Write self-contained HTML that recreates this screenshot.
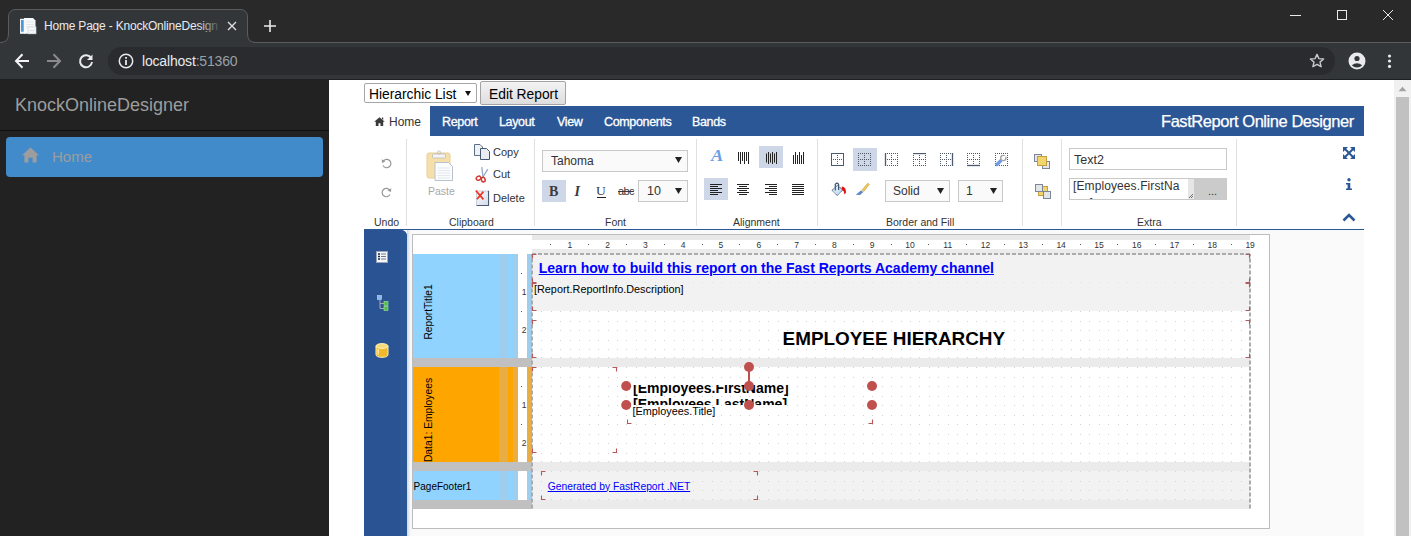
<!DOCTYPE html>
<html><head><meta charset="utf-8">
<style>
*{margin:0;padding:0;box-sizing:border-box}
html,body{width:1411px;height:536px;overflow:hidden;background:#fff;font-family:"Liberation Sans",sans-serif}
.a{position:absolute}
#frame{left:0;top:0;width:1411px;height:42px;background:#292929}
#toolbar{left:0;top:42px;width:1411px;height:37px;background:#323639;border-top:1px solid #5b5c5e}
#tbbot{left:0;top:79px;width:1411px;height:1px;background:#1e1f21}
#side{left:0;top:80px;width:329px;height:456px;background:#222}
.tab{top:115.6px;line-height:12.5px;font-size:12.5px;letter-spacing:-0.35px;color:#fff;-webkit-text-stroke:0.3px #fff;white-space:nowrap}
.sep{top:139px;width:1px;height:87px;background:#e0e0e0}
.lbl{top:216.6px;line-height:10.5px;font-size:10.5px;color:#333;white-space:nowrap}
.rn{width:20px;text-align:center;font-size:8.5px;line-height:9px;color:#333}
</style></head><body>
<!-- CHROME -->
<div id="frame" class="a"></div>
<div id="toolbar" class="a"></div>
<div id="tbbot" class="a"></div>
<svg class="a" style="left:0;top:0" width="300" height="44">
  <path d="M0 42.5 Q8.5 42.5 8.5 34 L8.5 17 Q8.5 9.5 16 9.5 L240 9.5 Q247.5 9.5 247.5 17 L247.5 34 Q247.5 42.5 256 42.5 L300 42.5 L300 44 L0 44Z" fill="#323639"/>
  <path d="M0 42.5 Q8.5 42.5 8.5 34 L8.5 17 Q8.5 9.5 16 9.5 L240 9.5 Q247.5 9.5 247.5 17 L247.5 34 Q247.5 42.5 256 42.5 L300 42.5" fill="none" stroke="#5b5c5e" stroke-width="1"/>
</svg>
<!-- tab icon -->
<svg class="a" style="left:19px;top:17px" width="18" height="18">
  <rect x="1" y="1.8" width="5" height="15" fill="#eef1f5"/>
  <rect x="2" y="3" width="2.7" height="11.7" fill="#4b9ad6"/>
  <path d="M5 1 H14 L16.5 3.5 V16.8 H5 Z" fill="#f8f9fb"/>
  <path d="M7 5H15M7 7.5H15M7 10H12" stroke="#dfe3e8" stroke-width="0.8"/>
  <rect x="9" y="9.8" width="8" height="7" fill="#f3f5f8" stroke="#cfd5dc" stroke-width="0.7"/>
  <path d="M11 13.5H15" stroke="#d5dae0" stroke-width="0.8"/>
</svg>
<div class="a" style="left:44px;top:20px;line-height:12px;font-size:12px;letter-spacing:-0.2px;color:#e8eaed;white-space:nowrap;width:174px;overflow:hidden">Home Page - KnockOnlineDesigner</div>
<div class="a" style="left:198px;top:14px;width:24px;height:24px;background:linear-gradient(to right,rgba(50,54,57,0),#323639)"></div>
<!-- tab close x -->
<svg class="a" style="left:227px;top:21px" width="10" height="10"><path d="M1 1L9 9M9 1L1 9" stroke="#dadce0" stroke-width="1.4"/></svg>
<!-- new tab + -->
<svg class="a" style="left:263px;top:19px" width="14" height="14"><path d="M7 1V13M1 7H13" stroke="#e8eaed" stroke-width="1.6"/></svg>
<!-- window controls -->
<svg class="a" style="left:1290px;top:10px" width="12" height="12"><path d="M0 5.5H11" stroke="#e8eaed" stroke-width="1"/></svg>
<svg class="a" style="left:1336px;top:9px" width="12" height="12"><rect x="1.5" y="1.5" width="9" height="9" fill="none" stroke="#e8eaed" stroke-width="1"/></svg>
<svg class="a" style="left:1382px;top:9px" width="12" height="12"><path d="M1 1L11 11M11 1L1 11" stroke="#e8eaed" stroke-width="1"/></svg>
<!-- nav buttons -->
<svg class="a" style="left:13px;top:52px" width="18" height="18"><path d="M16 9H3M9.5 2.3L3 9L9.5 15.7" fill="none" stroke="#f1f3f4" stroke-width="2"/></svg>
<svg class="a" style="left:45px;top:52px" width="18" height="18"><path d="M2 9H15M8.5 2.3L15 9L8.5 15.7" fill="none" stroke="#8a8b8d" stroke-width="2"/></svg>
<svg class="a" style="left:77px;top:51.5px" width="18" height="18"><path d="M14.2 6.2 A6 6 0 1 0 15 10" fill="none" stroke="#e8eaed" stroke-width="2"/><path d="M15.5 2.5 L15.5 8 L10 8 Z" fill="#e8eaed"/></svg>
<!-- omnibox -->
<div class="a" style="left:108px;top:47px;width:1227px;height:28px;border-radius:14px;background:#292b2e"></div>
<svg class="a" style="left:118px;top:53px" width="16" height="16"><circle cx="8" cy="8" r="6.7" fill="none" stroke="#e8eaed" stroke-width="1.5"/><rect x="7.1" y="7" width="1.8" height="5" fill="#e8eaed"/><rect x="7.1" y="4" width="1.8" height="1.8" fill="#e8eaed"/></svg>
<div class="a" style="left:142px;top:54.3px;line-height:14px;font-size:14px;letter-spacing:-0.18px;color:#e8eaed;white-space:nowrap">localhost<span style="color:#9aa0a6">:51360</span></div>
<svg class="a" style="left:1309px;top:53px" width="16" height="16"><path d="M8 1.3 L9.9 5.6 L14.6 6 L11 9.1 L12.1 13.7 L8 11.3 L3.9 13.7 L5 9.1 L1.4 6 L6.1 5.6 Z" fill="none" stroke="#c8c9cb" stroke-width="1.4" stroke-linejoin="round"/></svg>
<svg class="a" style="left:1348px;top:52px" width="18" height="18"><circle cx="9" cy="9" r="8.5" fill="#e8eaed"/><circle cx="9" cy="6.5" r="2.6" fill="#323639"/><path d="M3.8 13.2 Q9 9.5 14.2 13.2 Q12 15.6 9 15.6 Q6 15.6 3.8 13.2Z" fill="#323639"/></svg>
<svg class="a" style="left:1386px;top:53px" width="8" height="16"><circle cx="3.5" cy="3" r="1.6" fill="#e8eaed"/><circle cx="3.5" cy="8" r="1.6" fill="#e8eaed"/><circle cx="3.5" cy="13.4" r="1.6" fill="#e8eaed"/></svg>

<!-- SIDEBAR -->
<div id="side" class="a"></div>
<div class="a" style="left:15px;top:95.6px;line-height:18px;font-size:18px;color:#9d9d9d;white-space:nowrap">KnockOnlineDesigner</div>
<div class="a" style="left:0;top:130px;width:329px;height:1px;background:#101010"></div>
<div class="a" style="left:6px;top:137px;width:317px;height:40px;border-radius:4px;background:#428bca"></div>
<svg class="a" style="left:22px;top:147px" width="17" height="16"><path d="M8.5 0.5 L17 8.3 L14.6 8.3 L14.6 15.5 L10.6 15.5 L10.6 10.8 L6.4 10.8 L6.4 15.5 L2.4 15.5 L2.4 8.3 L0 8.3 Z" fill="#9d9d9d"/></svg>
<div class="a" style="left:52px;top:149.3px;line-height:15px;font-size:15px;color:#9d9d9d">Home</div>

<!-- CONTENT -->
<div id="content" class="a" style="left:329px;top:80px;width:1082px;height:456px;background:#fff"></div>
<!-- select + button -->
<div class="a" style="left:364px;top:83px;width:113px;height:20px;border:1px solid #a6a6a6;border-radius:2px;background:#fff"></div>
<div class="a" style="left:369px;top:88px;line-height:13.8px;font-size:13.8px;color:#000;white-space:nowrap">Hierarchic List</div>
<svg class="a" style="left:464.5px;top:90.5px" width="6" height="5"><path d="M0 0H6L3 5Z" fill="#111"/></svg>
<div class="a" style="left:480px;top:81px;width:86px;height:24px;border:1px solid #a3a3a3;border-radius:2px;background:linear-gradient(#f3f3f3,#dedede)"></div>
<div class="a" style="left:489px;top:87.5px;line-height:13.8px;font-size:13.8px;color:#000;white-space:nowrap">Edit Report</div>
<!-- tab bar -->
<div class="a" style="left:430px;top:106px;width:934px;height:30px;background:#2b5797"></div>
<svg class="a" style="left:374px;top:116.5px" width="11" height="9"><path d="M5.5 0.2 L10.8 4.8 L9.2 4.8 L9.2 9 L6.5 9 L6.5 6.3 L4.5 6.3 L4.5 9 L1.8 9 L1.8 4.8 L0.2 4.8 Z M7.9 0.6 H9.2 V2.9 L7.9 1.8Z" fill="#3a3a3a"/></svg>
<div class="a" style="left:389px;top:116.3px;line-height:12px;font-size:12px;color:#333;white-space:nowrap">Home</div>
<div class="a tab" style="left:442px">Report</div>
<div class="a tab" style="left:499px">Layout</div>
<div class="a tab" style="left:557px">View</div>
<div class="a tab" style="left:604px">Components</div>
<div class="a tab" style="left:692px">Bands</div>
<div class="a" style="left:1161px;top:112.8px;line-height:16.5px;font-size:16.5px;letter-spacing:-0.45px;-webkit-text-stroke:0.25px #fff;color:#fff;white-space:nowrap">FastReport Online Designer</div>
<!-- ribbon -->
<div class="a" style="left:364px;top:229px;width:1000px;height:1px;background:#2b5797"></div>
<div class="a sep" style="left:406px"></div>
<div class="a sep" style="left:534px"></div>
<div class="a sep" style="left:696px"></div>
<div class="a sep" style="left:817px"></div>
<div class="a sep" style="left:1022px"></div>
<div class="a sep" style="left:1061px"></div>
<div class="a sep" style="left:1236px"></div>

<!-- undo/redo -->
<svg class="a" style="left:381px;top:158px" width="11" height="11"><path d="M2.2 3.2 A4.2 4.2 0 1 1 2 7.5" fill="none" stroke="#979797" stroke-width="1.2"/><path d="M0.8 1.2 L4.4 3.4 L1 5Z" fill="#979797"/></svg>
<svg class="a" style="left:381px;top:187px" width="11" height="11"><path d="M8.8 3.2 A4.2 4.2 0 1 0 9 7.5" fill="none" stroke="#979797" stroke-width="1.2"/><path d="M10.2 1.2 L6.6 3.4 L10 5Z" fill="#979797"/></svg>
<!-- paste -->
<svg class="a" style="left:426px;top:150px" width="28" height="32">
 <rect x="1" y="3" width="23" height="25" rx="2" fill="#f6dfa9" stroke="#e8cf96" stroke-width="1"/>
 <rect x="6.5" y="4" width="13" height="4" rx="1" fill="#f4f4f4" stroke="#bdbdbd" stroke-width="0.8"/>
 <circle cx="13" cy="2.5" r="1.6" fill="none" stroke="#bdbdbd" stroke-width="0.8"/>
 <path d="M9 12.5 H22.5 L26.5 16.5 V30.5 H9 Z" fill="#fbfcfd" stroke="#b7c2cc" stroke-width="1"/>
 <path d="M11.5 18H24M11.5 20.5H24M11.5 23H24M11.5 25.5H24M11.5 28H24" stroke="#dde3e9" stroke-width="0.8"/>
</svg>
<div class="a" style="left:428px;top:185.7px;font-size:10.5px;line-height:10.5px;color:#a8a8a8">Paste</div>
<!-- copy -->
<svg class="a" style="left:473px;top:143px" width="18" height="18">
 <path d="M1.5 1.5 H7 L9.5 4 V12.5 H1.5Z" fill="#eef1f6" stroke="#5d6f86" stroke-width="1"/>
 <path d="M7.5 5.5 H13.5 L16.5 8.5 V16.5 H7.5Z" fill="#e9edf3" stroke="#47586e" stroke-width="1"/>
</svg>
<div class="a" style="left:493px;top:146.7px;font-size:11px;line-height:11px;color:#333">Copy</div>
<!-- cut -->
<svg class="a" style="left:475px;top:166px" width="15" height="18">
 <path d="M6.8 1.2 L8 11" stroke="#94aac6" stroke-width="1.3"/>
 <path d="M12.8 3.2 L8 11" stroke="#94aac6" stroke-width="1.3"/>
 <ellipse cx="3.5" cy="12.2" rx="2.3" ry="1.9" transform="rotate(-30 3.5 12.2)" fill="none" stroke="#cf3b32" stroke-width="1.5"/>
 <ellipse cx="8.2" cy="13.6" rx="1.9" ry="2.3" transform="rotate(-20 8.2 13.6)" fill="none" stroke="#cf3b32" stroke-width="1.5"/>
</svg>
<div class="a" style="left:493px;top:169.2px;font-size:11px;line-height:11px;color:#333">Cut</div>
<!-- delete -->
<svg class="a" style="left:474px;top:186px" width="16" height="21">
 <defs><linearGradient id="dl" x1="0" y1="0" x2="1" y2="1"><stop offset="0" stop-color="#f7f9fc"/><stop offset="1" stop-color="#d3dbea"/></linearGradient></defs>
 <path d="M2.8 19.5 V5.2 H14.5" fill="none" stroke="#b3bfcf" stroke-width="1"/>
 <path d="M14.5 4.8 V19.5 H2.5" fill="none" stroke="#4a5a70" stroke-width="1.2"/>
 <rect x="3.5" y="5.7" width="10.5" height="13.3" fill="url(#dl)"/>
 <path d="M1.8 4.5 L9.4 13.4 M9.4 5.6 L2.9 13.2" stroke="#f0321f" stroke-width="1.7"/>
</svg>
<div class="a" style="left:493px;top:193.2px;font-size:11px;line-height:11px;color:#333">Delete</div>
<!-- font select -->
<div class="a" style="left:542px;top:150px;width:146px;height:22px;border:1px solid #c8c8c8;background:#fafafa"></div>
<div class="a" style="left:551px;top:154.6px;font-size:12px;line-height:12px;color:#333">Tahoma</div>
<svg class="a" style="left:675px;top:157px" width="7" height="7"><path d="M0 0H7L3.5 6Z" fill="#222"/></svg>
<div class="a" style="left:542px;top:180px;width:24px;height:22px;background:#cdd7e7"></div>
<div class="a" style="left:549px;top:185px;font-family:'Liberation Serif',serif;font-weight:bold;font-size:14px;line-height:14px;color:#3a3a3a">B</div>
<div class="a" style="left:574.5px;top:185px;font-family:'Liberation Serif',serif;font-weight:bold;font-style:italic;font-size:14px;line-height:14px;color:#3a3a3a">I</div>
<div class="a" style="left:596px;top:184px;font-family:'Liberation Serif',serif;font-size:13.5px;line-height:14px;color:#3a3a3a">U</div>
<div class="a" style="left:596.5px;top:197px;width:9px;height:1px;background:#222"></div>
<div class="a" style="left:618px;top:186px;font-size:11px;line-height:11px;color:#3a3a3a;letter-spacing:-0.6px;text-decoration:line-through">abc</div>
<div class="a" style="left:638px;top:180px;width:50px;height:22px;border:1px solid #c8c8c8;background:#fafafa"></div>
<div class="a" style="left:647px;top:185px;font-size:12.5px;line-height:12px;color:#333">10</div>
<svg class="a" style="left:675px;top:188px" width="7" height="7"><path d="M0 0H7L3.5 6Z" fill="#222"/></svg>
<!-- alignment -->
<div class="a" style="left:759px;top:146px;width:24px;height:22px;background:#cdd7e7"></div>
<div class="a" style="left:704px;top:178px;width:24px;height:22px;background:#cdd7e7"></div>
<div class="a" style="left:711px;top:148px;font-family:'Liberation Serif',serif;font-weight:bold;font-style:italic;font-size:16px;line-height:16px;color:#6c9fe6;transform:scaleX(1.15);transform-origin:left">A</div>
<svg class="a" style="left:737px;top:151px" width="13" height="14"><path d="M1.5 1V10M3.5 1V13M5.5 1V10M7.5 1V13M9.5 1V10M11.5 1V13" stroke="#222" stroke-width="1"/></svg>
<svg class="a" style="left:765px;top:151px" width="13" height="14"><path d="M1.5 2.5V11.5M3.5 1V13M5.5 2.5V11.5M7.5 1V13M9.5 2.5V11.5M11.5 1V13" stroke="#222" stroke-width="1"/></svg>
<svg class="a" style="left:792px;top:151px" width="13" height="14"><path d="M1.5 4V13M3.5 1V13M5.5 4V13M7.5 1V13M9.5 4V13M11.5 1V13" stroke="#222" stroke-width="1"/></svg>
<svg class="a" style="left:709px;top:183px" width="14" height="13"><path d="M1 1.5H13M1 3.5H9M1 5.5H13M1 7.5H9M1 9.5H13M1 11.5H9" stroke="#222" stroke-width="1"/></svg>
<svg class="a" style="left:736px;top:183px" width="14" height="13"><path d="M1 1.5H13M3 3.5H11M1 5.5H13M3 7.5H11M1 9.5H13M3 11.5H11" stroke="#222" stroke-width="1"/></svg>
<svg class="a" style="left:764px;top:183px" width="14" height="13"><path d="M1 1.5H13M5 3.5H13M1 5.5H13M5 7.5H13M1 9.5H13M5 11.5H13" stroke="#222" stroke-width="1"/></svg>
<svg class="a" style="left:791px;top:183px" width="14" height="13"><path d="M1 1.5H13M1 3.5H13M1 5.5H13M1 7.5H13M1 9.5H13M1 11.5H13" stroke="#222" stroke-width="1"/></svg>
<!-- border icons -->
<div class="a" style="left:853px;top:148px;width:24px;height:23px;background:#cdd7e7"></div>
<svg class="a" style="left:831px;top:153px" width="206" height="14">
 <defs>
  <g id="dg"><path d="M0 0.5H13 M0 12.5H13 M0 6.5H13 M0.5 0V13 M12.5 0V13 M6.5 0V13" fill="none" stroke="#4d5663" stroke-width="1" stroke-dasharray="1 1"/></g>
 </defs>
 <rect x="0.5" y="0.5" width="12" height="12" fill="none" stroke="#4a5a70" stroke-width="1"/>
 <path d="M6.5 2V11 M2 6.5H11" stroke="#4d5663" stroke-width="1" stroke-dasharray="1 1"/>
 <use href="#dg" x="27"/>
 <use href="#dg" x="54"/><path d="M54.5 0V13" stroke="#4a5a70" stroke-width="1.3"/>
 <use href="#dg" x="82"/><path d="M82 0.5H95" stroke="#4a5a70" stroke-width="1.3"/>
 <use href="#dg" x="109"/><path d="M121.5 0V13" stroke="#4a5a70" stroke-width="1.3"/>
 <use href="#dg" x="136"/><path d="M136 12.5H149" stroke="#4a5a70" stroke-width="1.3"/>
 <path d="M164 0.5H177 M164 12.5H177 M164.5 0V13 M176.5 0V13" fill="none" stroke="#4d5663" stroke-width="1" stroke-dasharray="1 1"/>
 <path d="M166 11.5 L170 7.5" stroke="#6f9be6" stroke-width="3.2" stroke-linecap="round"/>
 <circle cx="172.3" cy="5" r="2.6" fill="#fff" stroke="#a3a3a3" stroke-width="1.4"/>
 <path d="M172.5 4.8 L175 2.5" stroke="#fff" stroke-width="1.6"/>
</svg>
<!-- bucket & brush -->
<svg class="a" style="left:831px;top:182px" width="17" height="15">
 <defs><linearGradient id="bk" x1="0" y1="0" x2="1" y2="1"><stop offset="0" stop-color="#f4f9fe"/><stop offset="1" stop-color="#a9d2f2"/></linearGradient></defs>
 <path d="M1 8.3 L6.4 3.4 L11.8 7.9 L6.2 13.6 Z" fill="url(#bk)" stroke="#3f4f66" stroke-width="1" stroke-dasharray="1.2 0.6"/>
 <path d="M4.3 8.5 V2.3 Q6 0 7.6 2.3 V8" fill="none" stroke="#3d5373" stroke-width="1.2"/>
 <path d="M10.8 4.6 Q15.2 4.8 15 10.8 L13.4 12.4 Q13.2 8.4 10.6 7.4 Z" fill="#e81010"/>
</svg>
<svg class="a" style="left:855px;top:182px" width="15" height="14">
 <path d="M6.8 8.2 L12.4 1.6 Q13.6 1 14.3 2.2 L8.8 9.6 Z" fill="#ecc75a" stroke="#c9a23a" stroke-width="0.6"/>
 <path d="M0.8 12.8 L6.2 8.2 L8.6 9.8 L5 12.9 Z" fill="#5f86c4"/>
 <path d="M6.2 8.2 L8.6 9.8" stroke="#e9e4cf" stroke-width="1"/>
</svg>
<div class="a" style="left:885px;top:180px;width:65px;height:22px;border:1px solid #c8c8c8;background:#fafafa"></div>
<div class="a" style="left:893px;top:185px;font-size:12px;line-height:12px;color:#333">Solid</div>
<svg class="a" style="left:937px;top:188px" width="7" height="7"><path d="M0 0H7L3.5 6Z" fill="#222"/></svg>
<div class="a" style="left:958px;top:180px;width:45px;height:22px;border:1px solid #c8c8c8;background:#fafafa"></div>
<div class="a" style="left:966px;top:185px;font-size:12px;line-height:12px;color:#333">1</div>
<svg class="a" style="left:990px;top:188px" width="7" height="7"><path d="M0 0H7L3.5 6Z" fill="#222"/></svg>
<!-- arrange -->
<svg class="a" style="left:1033px;top:153px" width="18" height="16">
 <rect x="1.5" y="1.5" width="7" height="7" fill="#e3e5e8" stroke="#7d8795" stroke-width="1"/>
 <rect x="9.5" y="8.5" width="7" height="7" fill="#e3e5e8" stroke="#7d8795" stroke-width="1"/>
 <rect x="4.5" y="3.5" width="9" height="9" fill="#f3d66b" stroke="#c2a042" stroke-width="1"/>
</svg>
<svg class="a" style="left:1034px;top:183px" width="18" height="16">
 <rect x="4.5" y="3.5" width="9" height="9" fill="#f3d66b" stroke="#c2a042" stroke-width="1"/>
 <rect x="1.5" y="1.5" width="7" height="7" fill="#e3e5e8" stroke="#7d8795" stroke-width="1"/>
 <rect x="9.5" y="8.5" width="7" height="7" fill="#e3e5e8" stroke="#7d8795" stroke-width="1"/>
</svg>
<!-- extra inputs -->
<div class="a" style="left:1069px;top:148px;width:158px;height:22px;border:1px solid #c8c8c8;background:#fff"></div>
<div class="a" style="left:1074px;top:153.5px;font-size:12.5px;line-height:12px;color:#333">Text2</div>
<div class="a" style="left:1069px;top:178px;width:158px;height:22px;border:1px solid #c8c8c8;background:#fff;overflow:hidden"></div>
<div class="a" style="left:1188px;top:179px;width:6px;height:20px;background:#e6e6e6"></div>
<div class="a" style="left:1194px;top:178px;width:33px;height:22px;background:#cbcbcb"></div><svg class="a" style="left:1188px;top:193px" width="6" height="6"><path d="M1 5L5 1M3 5L5 3" stroke="#555" stroke-width="0.8"/></svg>
<div class="a" style="left:1208px;top:186px;font-size:11px;line-height:11px;color:#333">...</div>
<div class="a" style="left:1073px;top:179px;width:115px;height:20px;overflow:hidden"><div style="font-size:12px;line-height:17px;padding-top:0px;margin-top:-1px;color:#333;white-space:nowrap;letter-spacing:0.1px">[Employees.FirstNa<br>me]</div></div>
<!-- right icons -->
<svg class="a" style="left:1343px;top:147px" width="12" height="12"><path d="M0 0H5L0 5Z M12 0H7L12 5Z M0 12H5L0 7Z M12 12H7L12 7Z" fill="#2b5797"/><path d="M1.5 1.5L10.5 10.5M10.5 1.5L1.5 10.5" stroke="#2b5797" stroke-width="2"/></svg>
<svg class="a" style="left:1345px;top:178px" width="8" height="13"><circle cx="4" cy="1.8" r="1.7" fill="#2b5797"/><path d="M1 5H5.3V10.5H7V12H1V10.5H2.6V6.5H1Z" fill="#2b5797"/></svg>
<svg class="a" style="left:1342px;top:212px" width="14" height="10"><path d="M1.5 8.5 L7 3 L12.5 8.5" fill="none" stroke="#2b5797" stroke-width="2.6"/></svg>
<div class="a lbl" style="left:374px">Undo</div>
<div class="a lbl" style="left:449px">Clipboard</div>
<div class="a lbl" style="left:605px">Font</div>
<div class="a lbl" style="left:733px">Alignment</div>
<div class="a lbl" style="left:886px">Border and Fill</div>
<div class="a lbl" style="left:1137px">Extra</div>

<!-- DESIGNER -->
<div class="a" style="left:364px;top:230px;width:43px;height:306px;background:#2a5394;border-top-right-radius:6px"></div>
<div class="a" style="left:400px;top:230px;width:7px;height:306px;background:#2c5797;border-top-right-radius:6px"></div>
<div class="a" style="left:407px;top:230px;width:957px;height:306px;background:#fafafa"></div>
<div class="a" style="left:407px;top:230px;width:5px;height:306px;background:linear-gradient(to right,#cfd8e5,#f4f6f9 60%,#fafafa)"></div>
<div class="a" style="left:412px;top:234px;width:858px;height:295px;background:#fff;border:1px solid #bcbcbc"></div>
<svg class="a" style="left:376px;top:251px" width="12" height="12"><rect x="0.5" y="0.5" width="11" height="11" fill="#f4f6fa" stroke="#9aa6b8" stroke-width="1"/><path d="M2 3H4M2 5.5H4M2 8H4" stroke="#1a2a44" stroke-width="1.3"/><path d="M5 3H10M5 5.5H10M5 8H10" stroke="#6d7a8e" stroke-width="1"/></svg>
<svg class="a" style="left:377px;top:295px" width="12" height="16"><rect x="0.5" y="0.5" width="4" height="4" fill="#8fb4ee" stroke="#c9dbf7" stroke-width="0.6"/><path d="M3 5V13.5H7M3 8.5H7" fill="none" stroke="#a9a9a9" stroke-width="1"/><rect x="7" y="6.5" width="4" height="4" fill="#4fbf4a" stroke="#a6e3a2" stroke-width="0.6"/><rect x="7" y="11.5" width="4" height="4" fill="#4fbf4a" stroke="#a6e3a2" stroke-width="0.6"/></svg>
<svg class="a" style="left:375px;top:343px" width="14" height="15"><path d="M1 3 V11.5 Q1 14.3 7 14.3 Q13 14.3 13 11.5 V3Z" fill="#f0b92c" stroke="#fff1b8" stroke-width="1"/><ellipse cx="7" cy="3" rx="6" ry="2.4" fill="#f7d978" stroke="#fff1b8" stroke-width="1"/><path d="M3.2 6 V11.5" stroke="#fbe49a" stroke-width="1.6"/></svg>
<div class="a" style="left:413px;top:254px;width:86px;height:104px;background:#90d3fe"></div>
<div class="a" style="left:499px;top:254px;width:9px;height:104px;background:#9fcdee"></div>
<div class="a" style="left:508px;top:254px;width:5px;height:104px;background:#90d3fe"></div>
<div class="a" style="left:513px;top:254px;width:5px;height:104px;background:#9fcdee"></div>
<div class="a" style="left:518px;top:254px;width:9px;height:104px;background:#fff"></div>
<div class="a" style="left:527px;top:254px;width:5px;height:104px;background:#9fcdee"></div>
<div class="a" style="left:413px;top:358px;width:119px;height:9px;background:#c0c0c0"></div>
<div class="a" style="left:532px;top:358px;width:718px;height:9px;background:#ebebeb"></div>
<div class="a" style="left:413px;top:367px;width:86px;height:95px;background:#ffa500"></div>
<div class="a" style="left:499px;top:367px;width:9px;height:95px;background:#e9ae43"></div>
<div class="a" style="left:508px;top:367px;width:5px;height:95px;background:#ffa500"></div>
<div class="a" style="left:513px;top:367px;width:5px;height:95px;background:#e9ae43"></div>
<div class="a" style="left:518px;top:367px;width:9px;height:95px;background:#fff"></div>
<div class="a" style="left:527px;top:367px;width:5px;height:95px;background:#e9ae43"></div>
<div class="a" style="left:413px;top:462px;width:119px;height:9px;background:#c0c0c0"></div>
<div class="a" style="left:532px;top:462px;width:718px;height:9px;background:#ebebeb"></div>
<div class="a" style="left:413px;top:471px;width:86px;height:29px;background:#90d3fe"></div>
<div class="a" style="left:499px;top:471px;width:9px;height:29px;background:#9fcdee"></div>
<div class="a" style="left:508px;top:471px;width:5px;height:29px;background:#90d3fe"></div>
<div class="a" style="left:513px;top:471px;width:5px;height:29px;background:#9fcdee"></div>
<div class="a" style="left:518px;top:471px;width:9px;height:29px;background:#fff"></div>
<div class="a" style="left:527px;top:471px;width:5px;height:29px;background:#9fcdee"></div>
<div class="a" style="left:413px;top:500px;width:119px;height:9px;background:#c0c0c0"></div>
<div class="a" style="left:532px;top:500px;width:718px;height:9px;background:#ebebeb"></div>
<div class="a" style="left:532px;top:254px;width:718px;height:57px;background:#f2f2f2"></div>
<div class="a" style="left:532px;top:471px;width:718px;height:29px;background:#f2f2f2"></div>
<div class="a" style="left:532px;top:235px;width:718px;height:5px;background:#e8e8e8"></div>
<div class="a" style="left:532px;top:249px;width:718px;height:5px;background:#ebebeb"></div>
<div class="a rn" style="left:559.79px;top:241px">1</div><div class="a" style="left:550px;top:244px;width:1px;height:1px;background:#6b4a4a"></div><div class="a rn" style="left:597.59px;top:241px">2</div><div class="a" style="left:588px;top:244px;width:1px;height:1px;background:#6b4a4a"></div><div class="a rn" style="left:635.38px;top:241px">3</div><div class="a" style="left:626px;top:244px;width:1px;height:1px;background:#6b4a4a"></div><div class="a rn" style="left:673.18px;top:241px">4</div><div class="a" style="left:664px;top:244px;width:1px;height:1px;background:#6b4a4a"></div><div class="a rn" style="left:710.98px;top:241px">5</div><div class="a" style="left:702px;top:244px;width:1px;height:1px;background:#6b4a4a"></div><div class="a rn" style="left:748.77px;top:241px">6</div><div class="a" style="left:739px;top:244px;width:1px;height:1px;background:#6b4a4a"></div><div class="a rn" style="left:786.57px;top:241px">7</div><div class="a" style="left:777px;top:244px;width:1px;height:1px;background:#6b4a4a"></div><div class="a rn" style="left:824.36px;top:241px">8</div><div class="a" style="left:815px;top:244px;width:1px;height:1px;background:#6b4a4a"></div><div class="a rn" style="left:862.15px;top:241px">9</div><div class="a" style="left:853px;top:244px;width:1px;height:1px;background:#6b4a4a"></div><div class="a rn" style="left:899.95px;top:241px">10</div><div class="a" style="left:891px;top:244px;width:1px;height:1px;background:#6b4a4a"></div><div class="a rn" style="left:937.75px;top:241px">11</div><div class="a" style="left:928px;top:244px;width:1px;height:1px;background:#6b4a4a"></div><div class="a rn" style="left:975.54px;top:241px">12</div><div class="a" style="left:966px;top:244px;width:1px;height:1px;background:#6b4a4a"></div><div class="a rn" style="left:1013.34px;top:241px">13</div><div class="a" style="left:1004px;top:244px;width:1px;height:1px;background:#6b4a4a"></div><div class="a rn" style="left:1051.13px;top:241px">14</div><div class="a" style="left:1042px;top:244px;width:1px;height:1px;background:#6b4a4a"></div><div class="a rn" style="left:1088.93px;top:241px">15</div><div class="a" style="left:1080px;top:244px;width:1px;height:1px;background:#6b4a4a"></div><div class="a rn" style="left:1126.72px;top:241px">16</div><div class="a" style="left:1117px;top:244px;width:1px;height:1px;background:#6b4a4a"></div><div class="a rn" style="left:1164.51px;top:241px">17</div><div class="a" style="left:1155px;top:244px;width:1px;height:1px;background:#6b4a4a"></div><div class="a rn" style="left:1202.31px;top:241px">18</div><div class="a" style="left:1193px;top:244px;width:1px;height:1px;background:#6b4a4a"></div><div class="a rn" style="left:1240.11px;top:241px">19</div><div class="a" style="left:1231px;top:244px;width:1px;height:1px;background:#6b4a4a"></div>
<div class="a" style="left:521px;top:273px;width:1px;height:1px;background:#6b4a4a"></div>
<div class="a rn" style="left:514px;top:287.80px;width:20px">1</div>
<div class="a" style="left:521px;top:311px;width:1px;height:1px;background:#6b4a4a"></div>
<div class="a rn" style="left:514px;top:325.59px;width:20px">2</div>
<div class="a" style="left:521px;top:386px;width:1px;height:1px;background:#6b4a4a"></div>
<div class="a rn" style="left:514px;top:400.80px;width:20px">1</div>
<div class="a" style="left:521px;top:424px;width:1px;height:1px;background:#6b4a4a"></div>
<div class="a rn" style="left:514px;top:438.59px;width:20px">2</div>
<svg class="a" style="left:0;top:0" width="1411" height="536"><path fill="#d3d3d3" d="M541 311h1v1h-1zM551 311h1v1h-1zM560 311h1v1h-1zM570 311h1v1h-1zM579 311h1v1h-1zM589 311h1v1h-1zM598 311h1v1h-1zM608 311h1v1h-1zM617 311h1v1h-1zM626 311h1v1h-1zM636 311h1v1h-1zM645 311h1v1h-1zM655 311h1v1h-1zM664 311h1v1h-1zM674 311h1v1h-1zM683 311h1v1h-1zM693 311h1v1h-1zM702 311h1v1h-1zM712 311h1v1h-1zM721 311h1v1h-1zM730 311h1v1h-1zM740 311h1v1h-1zM749 311h1v1h-1zM759 311h1v1h-1zM768 311h1v1h-1zM778 311h1v1h-1zM787 311h1v1h-1zM797 311h1v1h-1zM806 311h1v1h-1zM815 311h1v1h-1zM825 311h1v1h-1zM834 311h1v1h-1zM844 311h1v1h-1zM853 311h1v1h-1zM863 311h1v1h-1zM872 311h1v1h-1zM882 311h1v1h-1zM891 311h1v1h-1zM901 311h1v1h-1zM910 311h1v1h-1zM919 311h1v1h-1zM929 311h1v1h-1zM938 311h1v1h-1zM948 311h1v1h-1zM957 311h1v1h-1zM967 311h1v1h-1zM976 311h1v1h-1zM986 311h1v1h-1zM995 311h1v1h-1zM1004 311h1v1h-1zM1014 311h1v1h-1zM1023 311h1v1h-1zM1033 311h1v1h-1zM1042 311h1v1h-1zM1052 311h1v1h-1zM1061 311h1v1h-1zM1071 311h1v1h-1zM1080 311h1v1h-1zM1089 311h1v1h-1zM1099 311h1v1h-1zM1108 311h1v1h-1zM1118 311h1v1h-1zM1127 311h1v1h-1zM1137 311h1v1h-1zM1146 311h1v1h-1zM1156 311h1v1h-1zM1165 311h1v1h-1zM1175 311h1v1h-1zM1184 311h1v1h-1zM1193 311h1v1h-1zM1203 311h1v1h-1zM1212 311h1v1h-1zM1222 311h1v1h-1zM1231 311h1v1h-1zM1241 311h1v1h-1zM541 321h1v1h-1zM551 321h1v1h-1zM560 321h1v1h-1zM570 321h1v1h-1zM579 321h1v1h-1zM589 321h1v1h-1zM598 321h1v1h-1zM608 321h1v1h-1zM617 321h1v1h-1zM626 321h1v1h-1zM636 321h1v1h-1zM645 321h1v1h-1zM655 321h1v1h-1zM664 321h1v1h-1zM674 321h1v1h-1zM683 321h1v1h-1zM693 321h1v1h-1zM702 321h1v1h-1zM712 321h1v1h-1zM721 321h1v1h-1zM730 321h1v1h-1zM740 321h1v1h-1zM749 321h1v1h-1zM759 321h1v1h-1zM768 321h1v1h-1zM778 321h1v1h-1zM787 321h1v1h-1zM797 321h1v1h-1zM806 321h1v1h-1zM815 321h1v1h-1zM825 321h1v1h-1zM834 321h1v1h-1zM844 321h1v1h-1zM853 321h1v1h-1zM863 321h1v1h-1zM872 321h1v1h-1zM882 321h1v1h-1zM891 321h1v1h-1zM901 321h1v1h-1zM910 321h1v1h-1zM919 321h1v1h-1zM929 321h1v1h-1zM938 321h1v1h-1zM948 321h1v1h-1zM957 321h1v1h-1zM967 321h1v1h-1zM976 321h1v1h-1zM986 321h1v1h-1zM995 321h1v1h-1zM1004 321h1v1h-1zM1014 321h1v1h-1zM1023 321h1v1h-1zM1033 321h1v1h-1zM1042 321h1v1h-1zM1052 321h1v1h-1zM1061 321h1v1h-1zM1071 321h1v1h-1zM1080 321h1v1h-1zM1089 321h1v1h-1zM1099 321h1v1h-1zM1108 321h1v1h-1zM1118 321h1v1h-1zM1127 321h1v1h-1zM1137 321h1v1h-1zM1146 321h1v1h-1zM1156 321h1v1h-1zM1165 321h1v1h-1zM1175 321h1v1h-1zM1184 321h1v1h-1zM1193 321h1v1h-1zM1203 321h1v1h-1zM1212 321h1v1h-1zM1222 321h1v1h-1zM1231 321h1v1h-1zM1241 321h1v1h-1zM541 330h1v1h-1zM551 330h1v1h-1zM560 330h1v1h-1zM570 330h1v1h-1zM579 330h1v1h-1zM589 330h1v1h-1zM598 330h1v1h-1zM608 330h1v1h-1zM617 330h1v1h-1zM626 330h1v1h-1zM636 330h1v1h-1zM645 330h1v1h-1zM655 330h1v1h-1zM664 330h1v1h-1zM674 330h1v1h-1zM683 330h1v1h-1zM693 330h1v1h-1zM702 330h1v1h-1zM712 330h1v1h-1zM721 330h1v1h-1zM730 330h1v1h-1zM740 330h1v1h-1zM749 330h1v1h-1zM759 330h1v1h-1zM768 330h1v1h-1zM778 330h1v1h-1zM787 330h1v1h-1zM797 330h1v1h-1zM806 330h1v1h-1zM815 330h1v1h-1zM825 330h1v1h-1zM834 330h1v1h-1zM844 330h1v1h-1zM853 330h1v1h-1zM863 330h1v1h-1zM872 330h1v1h-1zM882 330h1v1h-1zM891 330h1v1h-1zM901 330h1v1h-1zM910 330h1v1h-1zM919 330h1v1h-1zM929 330h1v1h-1zM938 330h1v1h-1zM948 330h1v1h-1zM957 330h1v1h-1zM967 330h1v1h-1zM976 330h1v1h-1zM986 330h1v1h-1zM995 330h1v1h-1zM1004 330h1v1h-1zM1014 330h1v1h-1zM1023 330h1v1h-1zM1033 330h1v1h-1zM1042 330h1v1h-1zM1052 330h1v1h-1zM1061 330h1v1h-1zM1071 330h1v1h-1zM1080 330h1v1h-1zM1089 330h1v1h-1zM1099 330h1v1h-1zM1108 330h1v1h-1zM1118 330h1v1h-1zM1127 330h1v1h-1zM1137 330h1v1h-1zM1146 330h1v1h-1zM1156 330h1v1h-1zM1165 330h1v1h-1zM1175 330h1v1h-1zM1184 330h1v1h-1zM1193 330h1v1h-1zM1203 330h1v1h-1zM1212 330h1v1h-1zM1222 330h1v1h-1zM1231 330h1v1h-1zM1241 330h1v1h-1zM541 340h1v1h-1zM551 340h1v1h-1zM560 340h1v1h-1zM570 340h1v1h-1zM579 340h1v1h-1zM589 340h1v1h-1zM598 340h1v1h-1zM608 340h1v1h-1zM617 340h1v1h-1zM626 340h1v1h-1zM636 340h1v1h-1zM645 340h1v1h-1zM655 340h1v1h-1zM664 340h1v1h-1zM674 340h1v1h-1zM683 340h1v1h-1zM693 340h1v1h-1zM702 340h1v1h-1zM712 340h1v1h-1zM721 340h1v1h-1zM730 340h1v1h-1zM740 340h1v1h-1zM749 340h1v1h-1zM759 340h1v1h-1zM768 340h1v1h-1zM778 340h1v1h-1zM787 340h1v1h-1zM797 340h1v1h-1zM806 340h1v1h-1zM815 340h1v1h-1zM825 340h1v1h-1zM834 340h1v1h-1zM844 340h1v1h-1zM853 340h1v1h-1zM863 340h1v1h-1zM872 340h1v1h-1zM882 340h1v1h-1zM891 340h1v1h-1zM901 340h1v1h-1zM910 340h1v1h-1zM919 340h1v1h-1zM929 340h1v1h-1zM938 340h1v1h-1zM948 340h1v1h-1zM957 340h1v1h-1zM967 340h1v1h-1zM976 340h1v1h-1zM986 340h1v1h-1zM995 340h1v1h-1zM1004 340h1v1h-1zM1014 340h1v1h-1zM1023 340h1v1h-1zM1033 340h1v1h-1zM1042 340h1v1h-1zM1052 340h1v1h-1zM1061 340h1v1h-1zM1071 340h1v1h-1zM1080 340h1v1h-1zM1089 340h1v1h-1zM1099 340h1v1h-1zM1108 340h1v1h-1zM1118 340h1v1h-1zM1127 340h1v1h-1zM1137 340h1v1h-1zM1146 340h1v1h-1zM1156 340h1v1h-1zM1165 340h1v1h-1zM1175 340h1v1h-1zM1184 340h1v1h-1zM1193 340h1v1h-1zM1203 340h1v1h-1zM1212 340h1v1h-1zM1222 340h1v1h-1zM1231 340h1v1h-1zM1241 340h1v1h-1zM541 349h1v1h-1zM551 349h1v1h-1zM560 349h1v1h-1zM570 349h1v1h-1zM579 349h1v1h-1zM589 349h1v1h-1zM598 349h1v1h-1zM608 349h1v1h-1zM617 349h1v1h-1zM626 349h1v1h-1zM636 349h1v1h-1zM645 349h1v1h-1zM655 349h1v1h-1zM664 349h1v1h-1zM674 349h1v1h-1zM683 349h1v1h-1zM693 349h1v1h-1zM702 349h1v1h-1zM712 349h1v1h-1zM721 349h1v1h-1zM730 349h1v1h-1zM740 349h1v1h-1zM749 349h1v1h-1zM759 349h1v1h-1zM768 349h1v1h-1zM778 349h1v1h-1zM787 349h1v1h-1zM797 349h1v1h-1zM806 349h1v1h-1zM815 349h1v1h-1zM825 349h1v1h-1zM834 349h1v1h-1zM844 349h1v1h-1zM853 349h1v1h-1zM863 349h1v1h-1zM872 349h1v1h-1zM882 349h1v1h-1zM891 349h1v1h-1zM901 349h1v1h-1zM910 349h1v1h-1zM919 349h1v1h-1zM929 349h1v1h-1zM938 349h1v1h-1zM948 349h1v1h-1zM957 349h1v1h-1zM967 349h1v1h-1zM976 349h1v1h-1zM986 349h1v1h-1zM995 349h1v1h-1zM1004 349h1v1h-1zM1014 349h1v1h-1zM1023 349h1v1h-1zM1033 349h1v1h-1zM1042 349h1v1h-1zM1052 349h1v1h-1zM1061 349h1v1h-1zM1071 349h1v1h-1zM1080 349h1v1h-1zM1089 349h1v1h-1zM1099 349h1v1h-1zM1108 349h1v1h-1zM1118 349h1v1h-1zM1127 349h1v1h-1zM1137 349h1v1h-1zM1146 349h1v1h-1zM1156 349h1v1h-1zM1165 349h1v1h-1zM1175 349h1v1h-1zM1184 349h1v1h-1zM1193 349h1v1h-1zM1203 349h1v1h-1zM1212 349h1v1h-1zM1222 349h1v1h-1zM1231 349h1v1h-1zM1241 349h1v1h-1zM541 357h1v1h-1zM551 357h1v1h-1zM560 357h1v1h-1zM570 357h1v1h-1zM579 357h1v1h-1zM589 357h1v1h-1zM598 357h1v1h-1zM608 357h1v1h-1zM617 357h1v1h-1zM626 357h1v1h-1zM636 357h1v1h-1zM645 357h1v1h-1zM655 357h1v1h-1zM664 357h1v1h-1zM674 357h1v1h-1zM683 357h1v1h-1zM693 357h1v1h-1zM702 357h1v1h-1zM712 357h1v1h-1zM721 357h1v1h-1zM730 357h1v1h-1zM740 357h1v1h-1zM749 357h1v1h-1zM759 357h1v1h-1zM768 357h1v1h-1zM778 357h1v1h-1zM787 357h1v1h-1zM797 357h1v1h-1zM806 357h1v1h-1zM815 357h1v1h-1zM825 357h1v1h-1zM834 357h1v1h-1zM844 357h1v1h-1zM853 357h1v1h-1zM863 357h1v1h-1zM872 357h1v1h-1zM882 357h1v1h-1zM891 357h1v1h-1zM901 357h1v1h-1zM910 357h1v1h-1zM919 357h1v1h-1zM929 357h1v1h-1zM938 357h1v1h-1zM948 357h1v1h-1zM957 357h1v1h-1zM967 357h1v1h-1zM976 357h1v1h-1zM986 357h1v1h-1zM995 357h1v1h-1zM1004 357h1v1h-1zM1014 357h1v1h-1zM1023 357h1v1h-1zM1033 357h1v1h-1zM1042 357h1v1h-1zM1052 357h1v1h-1zM1061 357h1v1h-1zM1071 357h1v1h-1zM1080 357h1v1h-1zM1089 357h1v1h-1zM1099 357h1v1h-1zM1108 357h1v1h-1zM1118 357h1v1h-1zM1127 357h1v1h-1zM1137 357h1v1h-1zM1146 357h1v1h-1zM1156 357h1v1h-1zM1165 357h1v1h-1zM1175 357h1v1h-1zM1184 357h1v1h-1zM1193 357h1v1h-1zM1203 357h1v1h-1zM1212 357h1v1h-1zM1222 357h1v1h-1zM1231 357h1v1h-1zM1241 357h1v1h-1zM541 367h1v1h-1zM551 367h1v1h-1zM560 367h1v1h-1zM570 367h1v1h-1zM579 367h1v1h-1zM589 367h1v1h-1zM598 367h1v1h-1zM608 367h1v1h-1zM617 367h1v1h-1zM626 367h1v1h-1zM636 367h1v1h-1zM645 367h1v1h-1zM655 367h1v1h-1zM664 367h1v1h-1zM674 367h1v1h-1zM683 367h1v1h-1zM693 367h1v1h-1zM702 367h1v1h-1zM712 367h1v1h-1zM721 367h1v1h-1zM730 367h1v1h-1zM740 367h1v1h-1zM749 367h1v1h-1zM759 367h1v1h-1zM768 367h1v1h-1zM778 367h1v1h-1zM787 367h1v1h-1zM797 367h1v1h-1zM806 367h1v1h-1zM815 367h1v1h-1zM825 367h1v1h-1zM834 367h1v1h-1zM844 367h1v1h-1zM853 367h1v1h-1zM863 367h1v1h-1zM872 367h1v1h-1zM882 367h1v1h-1zM891 367h1v1h-1zM901 367h1v1h-1zM910 367h1v1h-1zM919 367h1v1h-1zM929 367h1v1h-1zM938 367h1v1h-1zM948 367h1v1h-1zM957 367h1v1h-1zM967 367h1v1h-1zM976 367h1v1h-1zM986 367h1v1h-1zM995 367h1v1h-1zM1004 367h1v1h-1zM1014 367h1v1h-1zM1023 367h1v1h-1zM1033 367h1v1h-1zM1042 367h1v1h-1zM1052 367h1v1h-1zM1061 367h1v1h-1zM1071 367h1v1h-1zM1080 367h1v1h-1zM1089 367h1v1h-1zM1099 367h1v1h-1zM1108 367h1v1h-1zM1118 367h1v1h-1zM1127 367h1v1h-1zM1137 367h1v1h-1zM1146 367h1v1h-1zM1156 367h1v1h-1zM1165 367h1v1h-1zM1175 367h1v1h-1zM1184 367h1v1h-1zM1193 367h1v1h-1zM1203 367h1v1h-1zM1212 367h1v1h-1zM1222 367h1v1h-1zM1231 367h1v1h-1zM1241 367h1v1h-1zM541 377h1v1h-1zM551 377h1v1h-1zM560 377h1v1h-1zM570 377h1v1h-1zM579 377h1v1h-1zM589 377h1v1h-1zM598 377h1v1h-1zM608 377h1v1h-1zM617 377h1v1h-1zM626 377h1v1h-1zM636 377h1v1h-1zM645 377h1v1h-1zM655 377h1v1h-1zM664 377h1v1h-1zM674 377h1v1h-1zM683 377h1v1h-1zM693 377h1v1h-1zM702 377h1v1h-1zM712 377h1v1h-1zM721 377h1v1h-1zM730 377h1v1h-1zM740 377h1v1h-1zM749 377h1v1h-1zM759 377h1v1h-1zM768 377h1v1h-1zM778 377h1v1h-1zM787 377h1v1h-1zM797 377h1v1h-1zM806 377h1v1h-1zM815 377h1v1h-1zM825 377h1v1h-1zM834 377h1v1h-1zM844 377h1v1h-1zM853 377h1v1h-1zM863 377h1v1h-1zM872 377h1v1h-1zM882 377h1v1h-1zM891 377h1v1h-1zM901 377h1v1h-1zM910 377h1v1h-1zM919 377h1v1h-1zM929 377h1v1h-1zM938 377h1v1h-1zM948 377h1v1h-1zM957 377h1v1h-1zM967 377h1v1h-1zM976 377h1v1h-1zM986 377h1v1h-1zM995 377h1v1h-1zM1004 377h1v1h-1zM1014 377h1v1h-1zM1023 377h1v1h-1zM1033 377h1v1h-1zM1042 377h1v1h-1zM1052 377h1v1h-1zM1061 377h1v1h-1zM1071 377h1v1h-1zM1080 377h1v1h-1zM1089 377h1v1h-1zM1099 377h1v1h-1zM1108 377h1v1h-1zM1118 377h1v1h-1zM1127 377h1v1h-1zM1137 377h1v1h-1zM1146 377h1v1h-1zM1156 377h1v1h-1zM1165 377h1v1h-1zM1175 377h1v1h-1zM1184 377h1v1h-1zM1193 377h1v1h-1zM1203 377h1v1h-1zM1212 377h1v1h-1zM1222 377h1v1h-1zM1231 377h1v1h-1zM1241 377h1v1h-1zM541 386h1v1h-1zM551 386h1v1h-1zM560 386h1v1h-1zM570 386h1v1h-1zM579 386h1v1h-1zM589 386h1v1h-1zM598 386h1v1h-1zM608 386h1v1h-1zM617 386h1v1h-1zM626 386h1v1h-1zM636 386h1v1h-1zM645 386h1v1h-1zM655 386h1v1h-1zM664 386h1v1h-1zM674 386h1v1h-1zM683 386h1v1h-1zM693 386h1v1h-1zM702 386h1v1h-1zM712 386h1v1h-1zM721 386h1v1h-1zM730 386h1v1h-1zM740 386h1v1h-1zM749 386h1v1h-1zM759 386h1v1h-1zM768 386h1v1h-1zM778 386h1v1h-1zM787 386h1v1h-1zM797 386h1v1h-1zM806 386h1v1h-1zM815 386h1v1h-1zM825 386h1v1h-1zM834 386h1v1h-1zM844 386h1v1h-1zM853 386h1v1h-1zM863 386h1v1h-1zM872 386h1v1h-1zM882 386h1v1h-1zM891 386h1v1h-1zM901 386h1v1h-1zM910 386h1v1h-1zM919 386h1v1h-1zM929 386h1v1h-1zM938 386h1v1h-1zM948 386h1v1h-1zM957 386h1v1h-1zM967 386h1v1h-1zM976 386h1v1h-1zM986 386h1v1h-1zM995 386h1v1h-1zM1004 386h1v1h-1zM1014 386h1v1h-1zM1023 386h1v1h-1zM1033 386h1v1h-1zM1042 386h1v1h-1zM1052 386h1v1h-1zM1061 386h1v1h-1zM1071 386h1v1h-1zM1080 386h1v1h-1zM1089 386h1v1h-1zM1099 386h1v1h-1zM1108 386h1v1h-1zM1118 386h1v1h-1zM1127 386h1v1h-1zM1137 386h1v1h-1zM1146 386h1v1h-1zM1156 386h1v1h-1zM1165 386h1v1h-1zM1175 386h1v1h-1zM1184 386h1v1h-1zM1193 386h1v1h-1zM1203 386h1v1h-1zM1212 386h1v1h-1zM1222 386h1v1h-1zM1231 386h1v1h-1zM1241 386h1v1h-1zM541 396h1v1h-1zM551 396h1v1h-1zM560 396h1v1h-1zM570 396h1v1h-1zM579 396h1v1h-1zM589 396h1v1h-1zM598 396h1v1h-1zM608 396h1v1h-1zM617 396h1v1h-1zM626 396h1v1h-1zM636 396h1v1h-1zM645 396h1v1h-1zM655 396h1v1h-1zM664 396h1v1h-1zM674 396h1v1h-1zM683 396h1v1h-1zM693 396h1v1h-1zM702 396h1v1h-1zM712 396h1v1h-1zM721 396h1v1h-1zM730 396h1v1h-1zM740 396h1v1h-1zM749 396h1v1h-1zM759 396h1v1h-1zM768 396h1v1h-1zM778 396h1v1h-1zM787 396h1v1h-1zM797 396h1v1h-1zM806 396h1v1h-1zM815 396h1v1h-1zM825 396h1v1h-1zM834 396h1v1h-1zM844 396h1v1h-1zM853 396h1v1h-1zM863 396h1v1h-1zM872 396h1v1h-1zM882 396h1v1h-1zM891 396h1v1h-1zM901 396h1v1h-1zM910 396h1v1h-1zM919 396h1v1h-1zM929 396h1v1h-1zM938 396h1v1h-1zM948 396h1v1h-1zM957 396h1v1h-1zM967 396h1v1h-1zM976 396h1v1h-1zM986 396h1v1h-1zM995 396h1v1h-1zM1004 396h1v1h-1zM1014 396h1v1h-1zM1023 396h1v1h-1zM1033 396h1v1h-1zM1042 396h1v1h-1zM1052 396h1v1h-1zM1061 396h1v1h-1zM1071 396h1v1h-1zM1080 396h1v1h-1zM1089 396h1v1h-1zM1099 396h1v1h-1zM1108 396h1v1h-1zM1118 396h1v1h-1zM1127 396h1v1h-1zM1137 396h1v1h-1zM1146 396h1v1h-1zM1156 396h1v1h-1zM1165 396h1v1h-1zM1175 396h1v1h-1zM1184 396h1v1h-1zM1193 396h1v1h-1zM1203 396h1v1h-1zM1212 396h1v1h-1zM1222 396h1v1h-1zM1231 396h1v1h-1zM1241 396h1v1h-1zM541 405h1v1h-1zM551 405h1v1h-1zM560 405h1v1h-1zM570 405h1v1h-1zM579 405h1v1h-1zM589 405h1v1h-1zM598 405h1v1h-1zM608 405h1v1h-1zM617 405h1v1h-1zM626 405h1v1h-1zM636 405h1v1h-1zM645 405h1v1h-1zM655 405h1v1h-1zM664 405h1v1h-1zM674 405h1v1h-1zM683 405h1v1h-1zM693 405h1v1h-1zM702 405h1v1h-1zM712 405h1v1h-1zM721 405h1v1h-1zM730 405h1v1h-1zM740 405h1v1h-1zM749 405h1v1h-1zM759 405h1v1h-1zM768 405h1v1h-1zM778 405h1v1h-1zM787 405h1v1h-1zM797 405h1v1h-1zM806 405h1v1h-1zM815 405h1v1h-1zM825 405h1v1h-1zM834 405h1v1h-1zM844 405h1v1h-1zM853 405h1v1h-1zM863 405h1v1h-1zM872 405h1v1h-1zM882 405h1v1h-1zM891 405h1v1h-1zM901 405h1v1h-1zM910 405h1v1h-1zM919 405h1v1h-1zM929 405h1v1h-1zM938 405h1v1h-1zM948 405h1v1h-1zM957 405h1v1h-1zM967 405h1v1h-1zM976 405h1v1h-1zM986 405h1v1h-1zM995 405h1v1h-1zM1004 405h1v1h-1zM1014 405h1v1h-1zM1023 405h1v1h-1zM1033 405h1v1h-1zM1042 405h1v1h-1zM1052 405h1v1h-1zM1061 405h1v1h-1zM1071 405h1v1h-1zM1080 405h1v1h-1zM1089 405h1v1h-1zM1099 405h1v1h-1zM1108 405h1v1h-1zM1118 405h1v1h-1zM1127 405h1v1h-1zM1137 405h1v1h-1zM1146 405h1v1h-1zM1156 405h1v1h-1zM1165 405h1v1h-1zM1175 405h1v1h-1zM1184 405h1v1h-1zM1193 405h1v1h-1zM1203 405h1v1h-1zM1212 405h1v1h-1zM1222 405h1v1h-1zM1231 405h1v1h-1zM1241 405h1v1h-1zM541 415h1v1h-1zM551 415h1v1h-1zM560 415h1v1h-1zM570 415h1v1h-1zM579 415h1v1h-1zM589 415h1v1h-1zM598 415h1v1h-1zM608 415h1v1h-1zM617 415h1v1h-1zM626 415h1v1h-1zM636 415h1v1h-1zM645 415h1v1h-1zM655 415h1v1h-1zM664 415h1v1h-1zM674 415h1v1h-1zM683 415h1v1h-1zM693 415h1v1h-1zM702 415h1v1h-1zM712 415h1v1h-1zM721 415h1v1h-1zM730 415h1v1h-1zM740 415h1v1h-1zM749 415h1v1h-1zM759 415h1v1h-1zM768 415h1v1h-1zM778 415h1v1h-1zM787 415h1v1h-1zM797 415h1v1h-1zM806 415h1v1h-1zM815 415h1v1h-1zM825 415h1v1h-1zM834 415h1v1h-1zM844 415h1v1h-1zM853 415h1v1h-1zM863 415h1v1h-1zM872 415h1v1h-1zM882 415h1v1h-1zM891 415h1v1h-1zM901 415h1v1h-1zM910 415h1v1h-1zM919 415h1v1h-1zM929 415h1v1h-1zM938 415h1v1h-1zM948 415h1v1h-1zM957 415h1v1h-1zM967 415h1v1h-1zM976 415h1v1h-1zM986 415h1v1h-1zM995 415h1v1h-1zM1004 415h1v1h-1zM1014 415h1v1h-1zM1023 415h1v1h-1zM1033 415h1v1h-1zM1042 415h1v1h-1zM1052 415h1v1h-1zM1061 415h1v1h-1zM1071 415h1v1h-1zM1080 415h1v1h-1zM1089 415h1v1h-1zM1099 415h1v1h-1zM1108 415h1v1h-1zM1118 415h1v1h-1zM1127 415h1v1h-1zM1137 415h1v1h-1zM1146 415h1v1h-1zM1156 415h1v1h-1zM1165 415h1v1h-1zM1175 415h1v1h-1zM1184 415h1v1h-1zM1193 415h1v1h-1zM1203 415h1v1h-1zM1212 415h1v1h-1zM1222 415h1v1h-1zM1231 415h1v1h-1zM1241 415h1v1h-1zM541 424h1v1h-1zM551 424h1v1h-1zM560 424h1v1h-1zM570 424h1v1h-1zM579 424h1v1h-1zM589 424h1v1h-1zM598 424h1v1h-1zM608 424h1v1h-1zM617 424h1v1h-1zM626 424h1v1h-1zM636 424h1v1h-1zM645 424h1v1h-1zM655 424h1v1h-1zM664 424h1v1h-1zM674 424h1v1h-1zM683 424h1v1h-1zM693 424h1v1h-1zM702 424h1v1h-1zM712 424h1v1h-1zM721 424h1v1h-1zM730 424h1v1h-1zM740 424h1v1h-1zM749 424h1v1h-1zM759 424h1v1h-1zM768 424h1v1h-1zM778 424h1v1h-1zM787 424h1v1h-1zM797 424h1v1h-1zM806 424h1v1h-1zM815 424h1v1h-1zM825 424h1v1h-1zM834 424h1v1h-1zM844 424h1v1h-1zM853 424h1v1h-1zM863 424h1v1h-1zM872 424h1v1h-1zM882 424h1v1h-1zM891 424h1v1h-1zM901 424h1v1h-1zM910 424h1v1h-1zM919 424h1v1h-1zM929 424h1v1h-1zM938 424h1v1h-1zM948 424h1v1h-1zM957 424h1v1h-1zM967 424h1v1h-1zM976 424h1v1h-1zM986 424h1v1h-1zM995 424h1v1h-1zM1004 424h1v1h-1zM1014 424h1v1h-1zM1023 424h1v1h-1zM1033 424h1v1h-1zM1042 424h1v1h-1zM1052 424h1v1h-1zM1061 424h1v1h-1zM1071 424h1v1h-1zM1080 424h1v1h-1zM1089 424h1v1h-1zM1099 424h1v1h-1zM1108 424h1v1h-1zM1118 424h1v1h-1zM1127 424h1v1h-1zM1137 424h1v1h-1zM1146 424h1v1h-1zM1156 424h1v1h-1zM1165 424h1v1h-1zM1175 424h1v1h-1zM1184 424h1v1h-1zM1193 424h1v1h-1zM1203 424h1v1h-1zM1212 424h1v1h-1zM1222 424h1v1h-1zM1231 424h1v1h-1zM1241 424h1v1h-1zM541 434h1v1h-1zM551 434h1v1h-1zM560 434h1v1h-1zM570 434h1v1h-1zM579 434h1v1h-1zM589 434h1v1h-1zM598 434h1v1h-1zM608 434h1v1h-1zM617 434h1v1h-1zM626 434h1v1h-1zM636 434h1v1h-1zM645 434h1v1h-1zM655 434h1v1h-1zM664 434h1v1h-1zM674 434h1v1h-1zM683 434h1v1h-1zM693 434h1v1h-1zM702 434h1v1h-1zM712 434h1v1h-1zM721 434h1v1h-1zM730 434h1v1h-1zM740 434h1v1h-1zM749 434h1v1h-1zM759 434h1v1h-1zM768 434h1v1h-1zM778 434h1v1h-1zM787 434h1v1h-1zM797 434h1v1h-1zM806 434h1v1h-1zM815 434h1v1h-1zM825 434h1v1h-1zM834 434h1v1h-1zM844 434h1v1h-1zM853 434h1v1h-1zM863 434h1v1h-1zM872 434h1v1h-1zM882 434h1v1h-1zM891 434h1v1h-1zM901 434h1v1h-1zM910 434h1v1h-1zM919 434h1v1h-1zM929 434h1v1h-1zM938 434h1v1h-1zM948 434h1v1h-1zM957 434h1v1h-1zM967 434h1v1h-1zM976 434h1v1h-1zM986 434h1v1h-1zM995 434h1v1h-1zM1004 434h1v1h-1zM1014 434h1v1h-1zM1023 434h1v1h-1zM1033 434h1v1h-1zM1042 434h1v1h-1zM1052 434h1v1h-1zM1061 434h1v1h-1zM1071 434h1v1h-1zM1080 434h1v1h-1zM1089 434h1v1h-1zM1099 434h1v1h-1zM1108 434h1v1h-1zM1118 434h1v1h-1zM1127 434h1v1h-1zM1137 434h1v1h-1zM1146 434h1v1h-1zM1156 434h1v1h-1zM1165 434h1v1h-1zM1175 434h1v1h-1zM1184 434h1v1h-1zM1193 434h1v1h-1zM1203 434h1v1h-1zM1212 434h1v1h-1zM1222 434h1v1h-1zM1231 434h1v1h-1zM1241 434h1v1h-1zM541 443h1v1h-1zM551 443h1v1h-1zM560 443h1v1h-1zM570 443h1v1h-1zM579 443h1v1h-1zM589 443h1v1h-1zM598 443h1v1h-1zM608 443h1v1h-1zM617 443h1v1h-1zM626 443h1v1h-1zM636 443h1v1h-1zM645 443h1v1h-1zM655 443h1v1h-1zM664 443h1v1h-1zM674 443h1v1h-1zM683 443h1v1h-1zM693 443h1v1h-1zM702 443h1v1h-1zM712 443h1v1h-1zM721 443h1v1h-1zM730 443h1v1h-1zM740 443h1v1h-1zM749 443h1v1h-1zM759 443h1v1h-1zM768 443h1v1h-1zM778 443h1v1h-1zM787 443h1v1h-1zM797 443h1v1h-1zM806 443h1v1h-1zM815 443h1v1h-1zM825 443h1v1h-1zM834 443h1v1h-1zM844 443h1v1h-1zM853 443h1v1h-1zM863 443h1v1h-1zM872 443h1v1h-1zM882 443h1v1h-1zM891 443h1v1h-1zM901 443h1v1h-1zM910 443h1v1h-1zM919 443h1v1h-1zM929 443h1v1h-1zM938 443h1v1h-1zM948 443h1v1h-1zM957 443h1v1h-1zM967 443h1v1h-1zM976 443h1v1h-1zM986 443h1v1h-1zM995 443h1v1h-1zM1004 443h1v1h-1zM1014 443h1v1h-1zM1023 443h1v1h-1zM1033 443h1v1h-1zM1042 443h1v1h-1zM1052 443h1v1h-1zM1061 443h1v1h-1zM1071 443h1v1h-1zM1080 443h1v1h-1zM1089 443h1v1h-1zM1099 443h1v1h-1zM1108 443h1v1h-1zM1118 443h1v1h-1zM1127 443h1v1h-1zM1137 443h1v1h-1zM1146 443h1v1h-1zM1156 443h1v1h-1zM1165 443h1v1h-1zM1175 443h1v1h-1zM1184 443h1v1h-1zM1193 443h1v1h-1zM1203 443h1v1h-1zM1212 443h1v1h-1zM1222 443h1v1h-1zM1231 443h1v1h-1zM1241 443h1v1h-1zM541 453h1v1h-1zM551 453h1v1h-1zM560 453h1v1h-1zM570 453h1v1h-1zM579 453h1v1h-1zM589 453h1v1h-1zM598 453h1v1h-1zM608 453h1v1h-1zM617 453h1v1h-1zM626 453h1v1h-1zM636 453h1v1h-1zM645 453h1v1h-1zM655 453h1v1h-1zM664 453h1v1h-1zM674 453h1v1h-1zM683 453h1v1h-1zM693 453h1v1h-1zM702 453h1v1h-1zM712 453h1v1h-1zM721 453h1v1h-1zM730 453h1v1h-1zM740 453h1v1h-1zM749 453h1v1h-1zM759 453h1v1h-1zM768 453h1v1h-1zM778 453h1v1h-1zM787 453h1v1h-1zM797 453h1v1h-1zM806 453h1v1h-1zM815 453h1v1h-1zM825 453h1v1h-1zM834 453h1v1h-1zM844 453h1v1h-1zM853 453h1v1h-1zM863 453h1v1h-1zM872 453h1v1h-1zM882 453h1v1h-1zM891 453h1v1h-1zM901 453h1v1h-1zM910 453h1v1h-1zM919 453h1v1h-1zM929 453h1v1h-1zM938 453h1v1h-1zM948 453h1v1h-1zM957 453h1v1h-1zM967 453h1v1h-1zM976 453h1v1h-1zM986 453h1v1h-1zM995 453h1v1h-1zM1004 453h1v1h-1zM1014 453h1v1h-1zM1023 453h1v1h-1zM1033 453h1v1h-1zM1042 453h1v1h-1zM1052 453h1v1h-1zM1061 453h1v1h-1zM1071 453h1v1h-1zM1080 453h1v1h-1zM1089 453h1v1h-1zM1099 453h1v1h-1zM1108 453h1v1h-1zM1118 453h1v1h-1zM1127 453h1v1h-1zM1137 453h1v1h-1zM1146 453h1v1h-1zM1156 453h1v1h-1zM1165 453h1v1h-1zM1175 453h1v1h-1zM1184 453h1v1h-1zM1193 453h1v1h-1zM1203 453h1v1h-1zM1212 453h1v1h-1zM1222 453h1v1h-1zM1231 453h1v1h-1zM1241 453h1v1h-1zM541 461h1v1h-1zM551 461h1v1h-1zM560 461h1v1h-1zM570 461h1v1h-1zM579 461h1v1h-1zM589 461h1v1h-1zM598 461h1v1h-1zM608 461h1v1h-1zM617 461h1v1h-1zM626 461h1v1h-1zM636 461h1v1h-1zM645 461h1v1h-1zM655 461h1v1h-1zM664 461h1v1h-1zM674 461h1v1h-1zM683 461h1v1h-1zM693 461h1v1h-1zM702 461h1v1h-1zM712 461h1v1h-1zM721 461h1v1h-1zM730 461h1v1h-1zM740 461h1v1h-1zM749 461h1v1h-1zM759 461h1v1h-1zM768 461h1v1h-1zM778 461h1v1h-1zM787 461h1v1h-1zM797 461h1v1h-1zM806 461h1v1h-1zM815 461h1v1h-1zM825 461h1v1h-1zM834 461h1v1h-1zM844 461h1v1h-1zM853 461h1v1h-1zM863 461h1v1h-1zM872 461h1v1h-1zM882 461h1v1h-1zM891 461h1v1h-1zM901 461h1v1h-1zM910 461h1v1h-1zM919 461h1v1h-1zM929 461h1v1h-1zM938 461h1v1h-1zM948 461h1v1h-1zM957 461h1v1h-1zM967 461h1v1h-1zM976 461h1v1h-1zM986 461h1v1h-1zM995 461h1v1h-1zM1004 461h1v1h-1zM1014 461h1v1h-1zM1023 461h1v1h-1zM1033 461h1v1h-1zM1042 461h1v1h-1zM1052 461h1v1h-1zM1061 461h1v1h-1zM1071 461h1v1h-1zM1080 461h1v1h-1zM1089 461h1v1h-1zM1099 461h1v1h-1zM1108 461h1v1h-1zM1118 461h1v1h-1zM1127 461h1v1h-1zM1137 461h1v1h-1zM1146 461h1v1h-1zM1156 461h1v1h-1zM1165 461h1v1h-1zM1175 461h1v1h-1zM1184 461h1v1h-1zM1193 461h1v1h-1zM1203 461h1v1h-1zM1212 461h1v1h-1zM1222 461h1v1h-1zM1231 461h1v1h-1zM1241 461h1v1h-1zM541 471h1v1h-1zM551 471h1v1h-1zM560 471h1v1h-1zM570 471h1v1h-1zM579 471h1v1h-1zM589 471h1v1h-1zM598 471h1v1h-1zM608 471h1v1h-1zM617 471h1v1h-1zM626 471h1v1h-1zM636 471h1v1h-1zM645 471h1v1h-1zM655 471h1v1h-1zM664 471h1v1h-1zM674 471h1v1h-1zM683 471h1v1h-1zM693 471h1v1h-1zM702 471h1v1h-1zM712 471h1v1h-1zM721 471h1v1h-1zM730 471h1v1h-1zM740 471h1v1h-1zM749 471h1v1h-1zM759 471h1v1h-1zM768 471h1v1h-1zM778 471h1v1h-1zM787 471h1v1h-1zM797 471h1v1h-1zM806 471h1v1h-1zM815 471h1v1h-1zM825 471h1v1h-1zM834 471h1v1h-1zM844 471h1v1h-1zM853 471h1v1h-1zM863 471h1v1h-1zM872 471h1v1h-1zM882 471h1v1h-1zM891 471h1v1h-1zM901 471h1v1h-1zM910 471h1v1h-1zM919 471h1v1h-1zM929 471h1v1h-1zM938 471h1v1h-1zM948 471h1v1h-1zM957 471h1v1h-1zM967 471h1v1h-1zM976 471h1v1h-1zM986 471h1v1h-1zM995 471h1v1h-1zM1004 471h1v1h-1zM1014 471h1v1h-1zM1023 471h1v1h-1zM1033 471h1v1h-1zM1042 471h1v1h-1zM1052 471h1v1h-1zM1061 471h1v1h-1zM1071 471h1v1h-1zM1080 471h1v1h-1zM1089 471h1v1h-1zM1099 471h1v1h-1zM1108 471h1v1h-1zM1118 471h1v1h-1zM1127 471h1v1h-1zM1137 471h1v1h-1zM1146 471h1v1h-1zM1156 471h1v1h-1zM1165 471h1v1h-1zM1175 471h1v1h-1zM1184 471h1v1h-1zM1193 471h1v1h-1zM1203 471h1v1h-1zM1212 471h1v1h-1zM1222 471h1v1h-1zM1231 471h1v1h-1zM1241 471h1v1h-1zM541 481h1v1h-1zM551 481h1v1h-1zM560 481h1v1h-1zM570 481h1v1h-1zM579 481h1v1h-1zM589 481h1v1h-1zM598 481h1v1h-1zM608 481h1v1h-1zM617 481h1v1h-1zM626 481h1v1h-1zM636 481h1v1h-1zM645 481h1v1h-1zM655 481h1v1h-1zM664 481h1v1h-1zM674 481h1v1h-1zM683 481h1v1h-1zM693 481h1v1h-1zM702 481h1v1h-1zM712 481h1v1h-1zM721 481h1v1h-1zM730 481h1v1h-1zM740 481h1v1h-1zM749 481h1v1h-1zM759 481h1v1h-1zM768 481h1v1h-1zM778 481h1v1h-1zM787 481h1v1h-1zM797 481h1v1h-1zM806 481h1v1h-1zM815 481h1v1h-1zM825 481h1v1h-1zM834 481h1v1h-1zM844 481h1v1h-1zM853 481h1v1h-1zM863 481h1v1h-1zM872 481h1v1h-1zM882 481h1v1h-1zM891 481h1v1h-1zM901 481h1v1h-1zM910 481h1v1h-1zM919 481h1v1h-1zM929 481h1v1h-1zM938 481h1v1h-1zM948 481h1v1h-1zM957 481h1v1h-1zM967 481h1v1h-1zM976 481h1v1h-1zM986 481h1v1h-1zM995 481h1v1h-1zM1004 481h1v1h-1zM1014 481h1v1h-1zM1023 481h1v1h-1zM1033 481h1v1h-1zM1042 481h1v1h-1zM1052 481h1v1h-1zM1061 481h1v1h-1zM1071 481h1v1h-1zM1080 481h1v1h-1zM1089 481h1v1h-1zM1099 481h1v1h-1zM1108 481h1v1h-1zM1118 481h1v1h-1zM1127 481h1v1h-1zM1137 481h1v1h-1zM1146 481h1v1h-1zM1156 481h1v1h-1zM1165 481h1v1h-1zM1175 481h1v1h-1zM1184 481h1v1h-1zM1193 481h1v1h-1zM1203 481h1v1h-1zM1212 481h1v1h-1zM1222 481h1v1h-1zM1231 481h1v1h-1zM1241 481h1v1h-1zM541 490h1v1h-1zM551 490h1v1h-1zM560 490h1v1h-1zM570 490h1v1h-1zM579 490h1v1h-1zM589 490h1v1h-1zM598 490h1v1h-1zM608 490h1v1h-1zM617 490h1v1h-1zM626 490h1v1h-1zM636 490h1v1h-1zM645 490h1v1h-1zM655 490h1v1h-1zM664 490h1v1h-1zM674 490h1v1h-1zM683 490h1v1h-1zM693 490h1v1h-1zM702 490h1v1h-1zM712 490h1v1h-1zM721 490h1v1h-1zM730 490h1v1h-1zM740 490h1v1h-1zM749 490h1v1h-1zM759 490h1v1h-1zM768 490h1v1h-1zM778 490h1v1h-1zM787 490h1v1h-1zM797 490h1v1h-1zM806 490h1v1h-1zM815 490h1v1h-1zM825 490h1v1h-1zM834 490h1v1h-1zM844 490h1v1h-1zM853 490h1v1h-1zM863 490h1v1h-1zM872 490h1v1h-1zM882 490h1v1h-1zM891 490h1v1h-1zM901 490h1v1h-1zM910 490h1v1h-1zM919 490h1v1h-1zM929 490h1v1h-1zM938 490h1v1h-1zM948 490h1v1h-1zM957 490h1v1h-1zM967 490h1v1h-1zM976 490h1v1h-1zM986 490h1v1h-1zM995 490h1v1h-1zM1004 490h1v1h-1zM1014 490h1v1h-1zM1023 490h1v1h-1zM1033 490h1v1h-1zM1042 490h1v1h-1zM1052 490h1v1h-1zM1061 490h1v1h-1zM1071 490h1v1h-1zM1080 490h1v1h-1zM1089 490h1v1h-1zM1099 490h1v1h-1zM1108 490h1v1h-1zM1118 490h1v1h-1zM1127 490h1v1h-1zM1137 490h1v1h-1zM1146 490h1v1h-1zM1156 490h1v1h-1zM1165 490h1v1h-1zM1175 490h1v1h-1zM1184 490h1v1h-1zM1193 490h1v1h-1zM1203 490h1v1h-1zM1212 490h1v1h-1zM1222 490h1v1h-1zM1231 490h1v1h-1zM1241 490h1v1h-1zM541 499h1v1h-1zM551 499h1v1h-1zM560 499h1v1h-1zM570 499h1v1h-1zM579 499h1v1h-1zM589 499h1v1h-1zM598 499h1v1h-1zM608 499h1v1h-1zM617 499h1v1h-1zM626 499h1v1h-1zM636 499h1v1h-1zM645 499h1v1h-1zM655 499h1v1h-1zM664 499h1v1h-1zM674 499h1v1h-1zM683 499h1v1h-1zM693 499h1v1h-1zM702 499h1v1h-1zM712 499h1v1h-1zM721 499h1v1h-1zM730 499h1v1h-1zM740 499h1v1h-1zM749 499h1v1h-1zM759 499h1v1h-1zM768 499h1v1h-1zM778 499h1v1h-1zM787 499h1v1h-1zM797 499h1v1h-1zM806 499h1v1h-1zM815 499h1v1h-1zM825 499h1v1h-1zM834 499h1v1h-1zM844 499h1v1h-1zM853 499h1v1h-1zM863 499h1v1h-1zM872 499h1v1h-1zM882 499h1v1h-1zM891 499h1v1h-1zM901 499h1v1h-1zM910 499h1v1h-1zM919 499h1v1h-1zM929 499h1v1h-1zM938 499h1v1h-1zM948 499h1v1h-1zM957 499h1v1h-1zM967 499h1v1h-1zM976 499h1v1h-1zM986 499h1v1h-1zM995 499h1v1h-1zM1004 499h1v1h-1zM1014 499h1v1h-1zM1023 499h1v1h-1zM1033 499h1v1h-1zM1042 499h1v1h-1zM1052 499h1v1h-1zM1061 499h1v1h-1zM1071 499h1v1h-1zM1080 499h1v1h-1zM1089 499h1v1h-1zM1099 499h1v1h-1zM1108 499h1v1h-1zM1118 499h1v1h-1zM1127 499h1v1h-1zM1137 499h1v1h-1zM1146 499h1v1h-1zM1156 499h1v1h-1zM1165 499h1v1h-1zM1175 499h1v1h-1zM1184 499h1v1h-1zM1193 499h1v1h-1zM1203 499h1v1h-1zM1212 499h1v1h-1zM1222 499h1v1h-1zM1231 499h1v1h-1zM1241 499h1v1h-1z"/></svg>
<svg class="a" style="left:0;top:0" width="1411" height="536"><path fill="#e2e2e2" d="M541 282h1v1h-1zM551 282h1v1h-1zM560 282h1v1h-1zM570 282h1v1h-1zM579 282h1v1h-1zM589 282h1v1h-1zM598 282h1v1h-1zM608 282h1v1h-1zM617 282h1v1h-1zM626 282h1v1h-1zM636 282h1v1h-1zM645 282h1v1h-1zM655 282h1v1h-1zM664 282h1v1h-1zM674 282h1v1h-1zM683 282h1v1h-1zM693 282h1v1h-1zM702 282h1v1h-1zM712 282h1v1h-1zM721 282h1v1h-1zM730 282h1v1h-1zM740 282h1v1h-1zM749 282h1v1h-1zM759 282h1v1h-1zM768 282h1v1h-1zM778 282h1v1h-1zM787 282h1v1h-1zM797 282h1v1h-1zM806 282h1v1h-1zM815 282h1v1h-1zM825 282h1v1h-1zM834 282h1v1h-1zM844 282h1v1h-1zM853 282h1v1h-1zM863 282h1v1h-1zM872 282h1v1h-1zM882 282h1v1h-1zM891 282h1v1h-1zM901 282h1v1h-1zM910 282h1v1h-1zM919 282h1v1h-1zM929 282h1v1h-1zM938 282h1v1h-1zM948 282h1v1h-1zM957 282h1v1h-1zM967 282h1v1h-1zM976 282h1v1h-1zM986 282h1v1h-1zM995 282h1v1h-1zM1004 282h1v1h-1zM1014 282h1v1h-1zM1023 282h1v1h-1zM1033 282h1v1h-1zM1042 282h1v1h-1zM1052 282h1v1h-1zM1061 282h1v1h-1zM1071 282h1v1h-1zM1080 282h1v1h-1zM1089 282h1v1h-1zM1099 282h1v1h-1zM1108 282h1v1h-1zM1118 282h1v1h-1zM1127 282h1v1h-1zM1137 282h1v1h-1zM1146 282h1v1h-1zM1156 282h1v1h-1zM1165 282h1v1h-1zM1175 282h1v1h-1zM1184 282h1v1h-1zM1193 282h1v1h-1zM1203 282h1v1h-1zM1212 282h1v1h-1zM1222 282h1v1h-1zM1231 282h1v1h-1zM1241 282h1v1h-1z"/></svg>
<svg class="a" style="left:530px;top:252px" width="724" height="260"><path d="M720 256.6V2 M2 2H720 M2 256.6V2" fill="none" stroke="#ababab" stroke-width="2" stroke-dasharray="4 2"/></svg>
<div class="a" style="left:538.7px;top:261.05px;font-size:14px;line-height:14px;font-weight:bold;color:#0000ff;text-decoration:underline;white-space:nowrap">Learn how to build this report on the Fast Reports Academy channel</div>
<div class="a" style="left:534px;top:283.6px;font-size:10.85px;line-height:10.85px;color:#000;white-space:nowrap">[Report.ReportInfo.Description]</div>
<div class="a" style="left:782.6px;top:329.9px;font-size:18.9px;line-height:18.9px;font-weight:bold;color:#000;white-space:nowrap">EMPLOYEE HIERARCHY</div>
<div class="a" style="left:632px;top:385px;width:240px;height:20px;overflow:hidden"><div style="position:absolute;left:1px;top:-5px;font-size:14px;line-height:16px;font-weight:bold;color:#000;white-space:nowrap">[Employees.FirstName]<br>[Employees.LastName]</div></div>
<div class="a" style="left:632.5px;top:406.4px;font-size:10.85px;line-height:10.85px;color:#000;white-space:nowrap">[Employees.Title]</div>
<div class="a" style="left:547.7px;top:481.5px;font-size:10.3px;line-height:10.3px;color:#0000ff;text-decoration:underline;white-space:nowrap">Generated by FastReport .NET</div>
<div class="a" style="left:413.6px;top:481.5px;font-size:10px;line-height:10px;color:#000;white-space:nowrap">PageFooter1</div>
<div class="a" style="left:429px;top:311.5px;width:0;height:0"><div style="position:absolute;left:0;top:0;transform:translate(-50%,-50%) rotate(-90deg);font-size:10.2px;line-height:10.2px;color:#000;white-space:nowrap;margin-top:0">ReportTitle1</div></div>
<div class="a" style="left:429px;top:419.5px;width:0;height:0"><div style="position:absolute;left:0;top:0;transform:translate(-50%,-50%) rotate(-90deg);font-size:10.3px;line-height:10.3px;color:#000;white-space:nowrap">Data1: Employees</div></div>
<svg class="a" style="left:0;top:0" width="1411" height="536"><path d="M532.5 258.5V254.5H536.5 M532.5 287.5V283.5H536.5 M532.5 324.5V320.5H536.5 M532.5 278.5V282.5H536.5 M532.5 306.5V310.5H536.5 M532.5 353.5V357.5H536.5 M1249.5 258.5V254.5H1245.5 M1249.5 287.5V283.5H1245.5 M1249.5 324.5V320.5H1245.5 M1249.5 278.5V282.5H1245.5 M1249.5 306.5V310.5H1245.5 M1249.5 353.5V357.5H1245.5 M616.5 371.5V367.5H612.5 M616.5 448.5V452.5H612.5 M532.5 371.5V367.5H536.5 M532.5 448.5V452.5H536.5 M627.5 419.5V423.5H631.5 M872.5 419.5V423.5H868.5 M541.5 475.5V471.5H545.5 M541.5 495.5V499.5H545.5 M757.5 475.5V471.5H753.5 M757.5 495.5V499.5H753.5" fill="none" stroke="#b85757" stroke-width="1.1"/></svg>
<svg class="a" style="left:0;top:0" width="1411" height="536"><g fill="#c0504d"><rect x="748" y="367" width="2" height="19"/><circle cx="749" cy="367" r="5"/><circle cx="626.2" cy="386" r="5"/><circle cx="749" cy="386" r="5"/><circle cx="872" cy="386" r="5"/><circle cx="626.2" cy="405" r="5"/><circle cx="749" cy="405" r="5"/><circle cx="872" cy="405" r="5"/></g></svg>
<div class="a" style="left:1394px;top:80px;width:17px;height:456px;background:#f1f1f1"></div>
<div class="a" style="left:1396px;top:97px;width:13px;height:439px;background:#c1c1c1"></div>
<svg class="a" style="left:1398px;top:86px" width="9" height="6"><path d="M0.5 5.2 L4.5 0.8 L8.5 5.2Z" fill="#a3a3a3"/></svg>
<!-- /DESIGNER -->
</body></html>
